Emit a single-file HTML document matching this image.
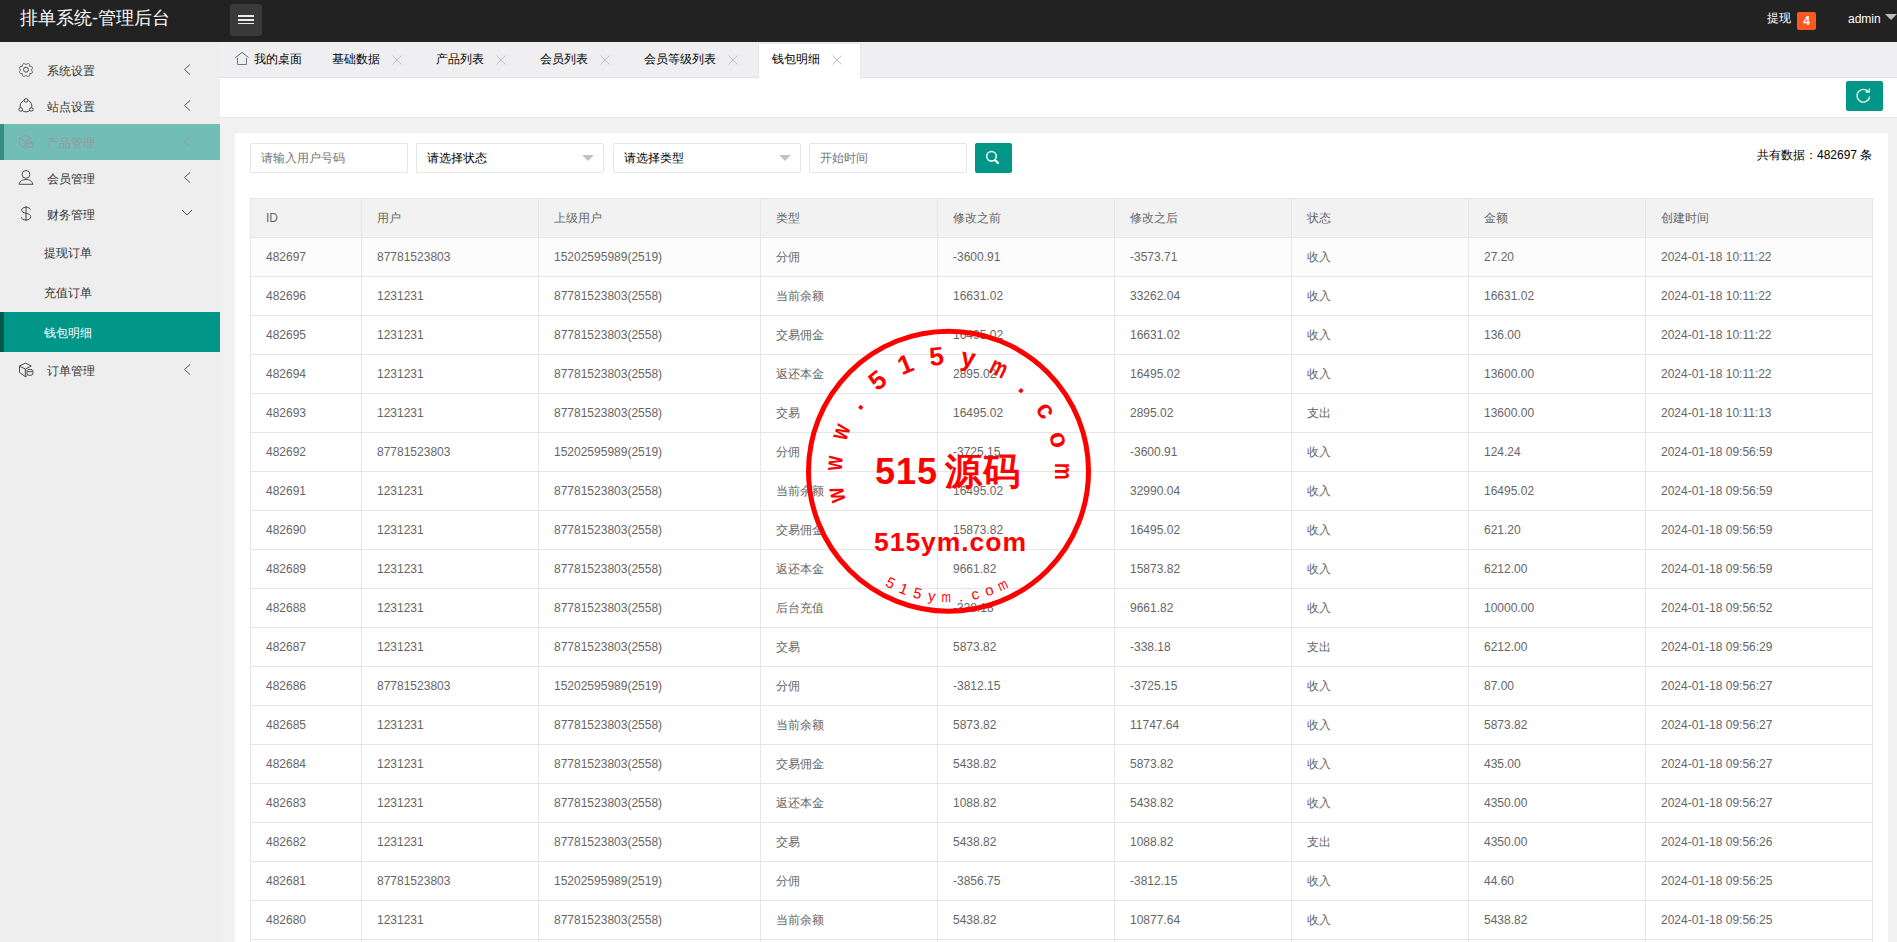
<!DOCTYPE html>
<html><head><meta charset="utf-8"><title>排单系统-管理后台</title>
<style>
*{margin:0;padding:0;box-sizing:border-box}
html,body{width:1897px;height:942px;overflow:hidden;background:#f1f1f1;font-family:"Liberation Sans",sans-serif;font-size:12px;color:#333}
.abs{position:absolute}
.hd{left:0;top:0;width:1897px;height:42px;background:#222}
.logo{left:20px;top:6px;font-size:18px;line-height:24px;color:#fff;white-space:nowrap}
.mbtn{left:230px;top:4px;width:32px;height:32px;background:#393939;border-radius:3px}
.mbtn i{position:absolute;left:8px;width:16px;height:2px;background:#ececec}
.tx{left:1767px;top:10px;line-height:16px;color:#fff;font-size:12px}
.badge{left:1797px;top:12px;width:19px;height:18px;background:#ff5722;border-radius:2px;color:#fff;font-weight:bold;font-size:12px;line-height:18px;text-align:center}
.admin{left:1848px;top:11px;line-height:16px;color:#fff;font-size:12px}
.tri{left:1885px;top:14px;width:0;height:0;border-left:6px solid transparent;border-right:6px solid transparent;border-top:6px solid #bdbdbd}

.side{left:0;top:42px;width:220px;height:900px;background:#eee}
.nav{left:0;width:220px;height:36px;color:#333}
.nav .t{position:absolute;left:47px;top:1px;line-height:36px;font-size:12px;white-space:nowrap}
.nav svg{position:absolute}
.sub{left:0;width:220px;height:40px}
.sub .t{position:absolute;left:44px;top:1px;line-height:40px;font-size:12px;color:#333}
.hover{background:#72bdb6}
.hover .t{color:#999}
.act{background:#009688}
.act .t{color:#fff}
.lbar{position:absolute;left:0;top:0;width:4px;height:100%}

.tabs{left:220px;top:42px;width:1677px;height:36px;background:#efeff2;border-bottom:1px solid #e2e2e2}
.tab{top:0;height:35px;line-height:35px;font-size:12px;color:#000;white-space:nowrap}
.x{position:absolute;top:13px;width:10px;height:10px}
.tabon{left:538px;top:1px;width:103px;height:35px;background:#fff;border:1px solid #e6e6e6;border-bottom:none}
.strip{left:220px;top:78px;width:1677px;height:40px;background:#fff;border-bottom:1px solid #e6e6e6}
.rbtn{left:1846px;top:81px;width:37px;height:30px;background:#009688;border-radius:2px}

.card{left:235px;top:133px;width:1653px;height:820px;background:#fff;border-radius:2px}
.inp{top:143px;height:30px;border:1px solid #e6e6e6;border-radius:2px;background:#fff}
.inp .p{position:absolute;left:10px;top:0;line-height:28px;color:#757575;font-size:12px;white-space:nowrap}
.inp .v{position:absolute;left:10px;top:0;line-height:28px;color:#000;font-size:12px;white-space:nowrap}
.inp .ar{position:absolute;top:11px;width:0;height:0;border-left:6px solid transparent;border-right:6px solid transparent;border-top:6px solid #c2c2c2}
.sbtn{left:975px;top:143px;width:37px;height:30px;background:#009688;border-radius:2px}
.total{left:1757px;top:147px;line-height:16px;color:#000;font-size:12px;white-space:nowrap}

.grid{left:250px;top:198px;width:1623px}
.row{display:flex;height:39px;border-bottom:1px solid #e6e6e6}
.row.h{height:40px;border-top:1px solid #e6e6e6;background:#f2f2f2}
.row.hov{background:#fcfcfc}
.c{border-left:1px solid #e6e6e6;padding-left:15px;line-height:38px;color:#666;font-size:12px;white-space:nowrap;overflow:hidden;flex:none}
.c:last-child{border-right:1px solid #e6e6e6}
.stamp{left:0;top:0;width:1897px;height:942px;pointer-events:none}
.tofu .z{font-size:1.3333em}
.tofu .zs{font-size:50px;stroke:#f00;stroke-width:4px;transform:translateY(4px)}
</style></head>
<body>
<!-- header -->
<div class="abs hd"></div>
<div class="abs logo"><span class="z">排单系统</span>-<span class="z">管理后台</span></div>
<div class="abs mbtn"><i style="top:11px;height:1.7px"></i><i style="top:15px;height:1.8px"></i><i style="top:19px;height:1.4px"></i></div>
<div class="abs tx"><span class="z">提现</span></div>
<div class="abs badge">4</div>
<div class="abs admin">admin</div>
<div class="abs tri"></div>

<!-- sidebar -->
<div class="abs side"></div>
<div class="abs nav " style="top:52px"><svg width="220" height="36" style="left:0;top:0"><path d="M32.37 20.64 L32.24 20.88 L32.06 21.09 L31.83 21.26 L31.56 21.41 L31.26 21.51 L30.93 21.58 L30.60 21.63 L30.27 21.65 L29.95 21.65 L29.68 21.68 L29.65 21.95 L29.65 22.27 L29.63 22.60 L29.58 22.93 L29.51 23.26 L29.41 23.56 L29.26 23.83 L29.09 24.06 L28.88 24.24 L28.64 24.37 L28.38 24.45 L28.10 24.47 L27.81 24.43 L27.52 24.34 L27.23 24.20 L26.95 24.02 L26.69 23.82 L26.44 23.60 L26.21 23.38 L26.00 23.20 L25.79 23.38 L25.56 23.60 L25.31 23.82 L25.05 24.02 L24.77 24.20 L24.48 24.34 L24.19 24.43 L23.90 24.47 L23.62 24.45 L23.36 24.37 L23.12 24.24 L22.91 24.06 L22.74 23.83 L22.59 23.56 L22.49 23.26 L22.42 22.93 L22.37 22.60 L22.35 22.27 L22.35 21.95 L22.32 21.68 L22.05 21.65 L21.73 21.65 L21.40 21.63 L21.07 21.58 L20.74 21.51 L20.44 21.41 L20.17 21.26 L19.94 21.09 L19.76 20.88 L19.63 20.64 L19.55 20.38 L19.53 20.10 L19.57 19.81 L19.66 19.52 L19.80 19.23 L19.98 18.95 L20.18 18.69 L20.40 18.44 L20.62 18.21 L20.80 18.00 L20.62 17.79 L20.40 17.56 L20.18 17.31 L19.98 17.05 L19.80 16.77 L19.66 16.48 L19.57 16.19 L19.53 15.90 L19.55 15.62 L19.63 15.36 L19.76 15.12 L19.94 14.91 L20.17 14.74 L20.44 14.59 L20.74 14.49 L21.07 14.42 L21.40 14.37 L21.73 14.35 L22.05 14.35 L22.32 14.32 L22.35 14.05 L22.35 13.73 L22.37 13.40 L22.42 13.07 L22.49 12.74 L22.59 12.44 L22.74 12.17 L22.91 11.94 L23.12 11.76 L23.36 11.63 L23.62 11.55 L23.90 11.53 L24.19 11.57 L24.48 11.66 L24.77 11.80 L25.05 11.98 L25.31 12.18 L25.56 12.40 L25.79 12.62 L26.00 12.80 L26.21 12.62 L26.44 12.40 L26.69 12.18 L26.95 11.98 L27.23 11.80 L27.52 11.66 L27.81 11.57 L28.10 11.53 L28.38 11.55 L28.64 11.63 L28.88 11.76 L29.09 11.94 L29.26 12.17 L29.41 12.44 L29.51 12.74 L29.58 13.07 L29.63 13.40 L29.65 13.73 L29.65 14.05 L29.68 14.32 L29.95 14.35 L30.27 14.35 L30.60 14.37 L30.93 14.42 L31.26 14.49 L31.56 14.59 L31.83 14.74 L32.06 14.91 L32.24 15.12 L32.37 15.36 L32.45 15.62 L32.47 15.90 L32.43 16.19 L32.34 16.48 L32.20 16.77 L32.02 17.05 L31.82 17.31 L31.60 17.56 L31.38 17.79 L31.20 18.00 L31.38 18.21 L31.60 18.44 L31.82 18.69 L32.02 18.95 L32.20 19.23 L32.34 19.52 L32.43 19.81 L32.47 20.10 L32.45 20.38 L32.37 20.64Z" fill="none" stroke="#444" stroke-width="0.95"/><circle cx="26" cy="17.7" r="2.5" fill="none" stroke="#444" stroke-width="0.95"/><path d="M190 12.5 L184.5 17.5 L190 22.5" fill="none" stroke="#555" stroke-width="1"/></svg><span class="t"><span class="z">系统设置</span></span></div>
<div class="abs nav " style="top:88px"><svg width="220" height="36" style="left:0;top:0"><circle cx="26" cy="18" r="5.9" fill="none" stroke="#444" stroke-width="0.95"/><circle cx="26.00" cy="12.40" r="1.8" fill="#eee" stroke="#444" stroke-width="0.95"/><circle cx="20.70" cy="21.40" r="1.8" fill="#eee" stroke="#444" stroke-width="0.95"/><circle cx="31.30" cy="21.40" r="1.8" fill="#eee" stroke="#444" stroke-width="0.95"/><path d="M190 12.5 L184.5 17.5 L190 22.5" fill="none" stroke="#555" stroke-width="1"/></svg><span class="t"><span class="z">站点设置</span></span></div>
<div class="abs nav hover" style="top:124px"><div class="lbar" style="background:#3b8c83"></div><svg width="220" height="36" style="left:0;top:0"><path d="M19.3 14.1 L25.4 11.1 L31.3 14.0 L25.3 17.0 Z M19.5 14.2 L19.5 20.4 L25.3 24.7 L25.3 17.0 M25.3 24.7 L27.3 23.6" fill="none" stroke="#999" stroke-width="0.95" stroke-linejoin="round"/><path d="M27.0 18.6 L27.0 22.1 M32.8 18.6 L32.8 22.1" stroke="#999" stroke-width="0.95"/><ellipse cx="29.9" cy="18.6" rx="2.9" ry="1.2" fill="#72bdb6" stroke="#999" stroke-width="0.95"/><path d="M27.0 22.1 A2.9 1.2 0 0 0 32.8 22.1" fill="none" stroke="#999" stroke-width="0.95"/><path d="M190 12.5 L184.5 17.5 L190 22.5" fill="none" stroke="#999" stroke-width="1"/></svg><span class="t"><span class="z">产品管理</span></span></div>
<div class="abs nav " style="top:160px"><svg width="220" height="36" style="left:0;top:0"><circle cx="26" cy="14.4" r="3.9" fill="none" stroke="#444" stroke-width="0.95"/><path d="M19 24.3 A7.2 6.3 0 0 1 33 24.3 Z" fill="none" stroke="#444" stroke-width="0.95"/><path d="M190 12.5 L184.5 17.5 L190 22.5" fill="none" stroke="#555" stroke-width="1"/></svg><span class="t"><span class="z">会员管理</span></span></div>
<div class="abs nav " style="top:196px"><svg width="220" height="36" style="left:0;top:0"><path d="M30.4 13.6 C30 12.0 28.3 11.3 26 11.3 C23.4 11.3 21.7 12.3 21.7 14.1 C21.7 16.0 23.6 16.8 26 17.3 C28.6 17.8 30.7 18.6 30.7 20.8 C30.7 22.7 28.7 23.9 26 23.9 C23.3 23.9 21.5 23.0 21.3 21.2 M26 10.0 L26 25.0" fill="none" stroke="#444" stroke-width="0.95"/><path d="M182 14 L187 19 L192 14" fill="none" stroke="#555" stroke-width="1"/></svg><span class="t"><span class="z">财务管理</span></span></div>
<div class="abs sub" style="top:232px"><span class="t"><span class="z">提现订单</span></span></div>
<div class="abs sub" style="top:272px"><span class="t"><span class="z">充值订单</span></span></div>
<div class="abs sub act" style="top:312px"><div class="lbar" style="background:#05564e"></div><span class="t"><span class="z">钱包明细</span></span></div>
<div class="abs nav " style="top:352px"><svg width="220" height="36" style="left:0;top:0"><path d="M19.3 14.1 L25.4 11.1 L31.3 14.0 L25.3 17.0 Z M19.5 14.2 L19.5 20.4 L25.3 24.7 L25.3 17.0 M25.3 24.7 L27.3 23.6" fill="none" stroke="#444" stroke-width="0.95" stroke-linejoin="round"/><path d="M27.0 18.6 L27.0 22.1 M32.8 18.6 L32.8 22.1" stroke="#444" stroke-width="0.95"/><ellipse cx="29.9" cy="18.6" rx="2.9" ry="1.2" fill="#eee" stroke="#444" stroke-width="0.95"/><path d="M27.0 22.1 A2.9 1.2 0 0 0 32.8 22.1" fill="none" stroke="#444" stroke-width="0.95"/><path d="M190 12.5 L184.5 17.5 L190 22.5" fill="none" stroke="#555" stroke-width="1"/></svg><span class="t"><span class="z">订单管理</span></span></div>

<!-- tabs -->
<div class="abs tabs">
<div class="abs tabon"></div><svg class="abs" style="left:15px;top:10px" width="15" height="14" viewBox="0 0 15 14"><path d="M0.4 5.6 L7 0.4 L13.6 5.6" fill="none" stroke="#666" stroke-width="1"/><path d="M2.5 6 L2.5 12.5 L11.5 12.5 L11.5 6" fill="none" stroke="#777" stroke-width="1"/></svg><div class="abs tab" style="left:34px"><span class="z">我的桌面</span></div><div class="abs tab" style="left:112px"><span class="z">基础数据</span></div><div class="abs" style="left:0;top:0"><svg class="x" style="left:172px" viewBox="0 0 10 10"><path d="M0.5 0.5 L9.5 9.5 M9.5 0.5 L0.5 9.5" stroke="#c0c0c0" stroke-width="1"/></svg></div><div class="abs tab" style="left:216px"><span class="z">产品列表</span></div><div class="abs" style="left:0;top:0"><svg class="x" style="left:276px" viewBox="0 0 10 10"><path d="M0.5 0.5 L9.5 9.5 M9.5 0.5 L0.5 9.5" stroke="#c0c0c0" stroke-width="1"/></svg></div><div class="abs tab" style="left:320px"><span class="z">会员列表</span></div><div class="abs" style="left:0;top:0"><svg class="x" style="left:380px" viewBox="0 0 10 10"><path d="M0.5 0.5 L9.5 9.5 M9.5 0.5 L0.5 9.5" stroke="#c0c0c0" stroke-width="1"/></svg></div><div class="abs tab" style="left:424px"><span class="z">会员等级列表</span></div><div class="abs" style="left:0;top:0"><svg class="x" style="left:508px" viewBox="0 0 10 10"><path d="M0.5 0.5 L9.5 9.5 M9.5 0.5 L0.5 9.5" stroke="#c0c0c0" stroke-width="1"/></svg></div><div class="abs tab" style="left:552px"><span class="z">钱包明细</span></div><div class="abs" style="left:0;top:0"><svg class="x" style="left:612px" viewBox="0 0 10 10"><path d="M0.5 0.5 L9.5 9.5 M9.5 0.5 L0.5 9.5" stroke="#c0c0c0" stroke-width="1"/></svg></div>
</div>
<div class="abs strip"></div>
<div class="abs rbtn"><svg width="37" height="30" viewBox="0 0 37 30"><path d="M22.6 11 A6.4 6.4 0 1 0 23.7 15.6" fill="none" stroke="#fff" stroke-width="1.3"/><path d="M19.6 10.9 L23.2 11.1 L23.4 7.6" fill="none" stroke="#fff" stroke-width="1.3"/></svg></div>

<!-- card -->
<div class="abs card"></div>
<div class="abs inp" style="left:250px;width:158px"><span class="p"><span class="z">请输入用户号码</span></span></div>
<div class="abs inp" style="left:416px;width:188px"><span class="v"><span class="z">请选择状态</span></span><i class="ar" style="left:165px"></i></div>
<div class="abs inp" style="left:613px;width:188px"><span class="v"><span class="z">请选择类型</span></span><i class="ar" style="left:165px"></i></div>
<div class="abs inp" style="left:809px;width:158px"><span class="p"><span class="z">开始时间</span></span></div>
<div class="abs sbtn"><svg width="37" height="30" viewBox="0 0 37 30"><circle cx="16.5" cy="13.3" r="4.8" fill="none" stroke="#fff" stroke-width="1.5"/><path d="M20 17 L23 20" stroke="#fff" stroke-width="2.2" stroke-linecap="round"/></svg></div>
<div class="abs total"><span class="z">共有数据：</span>482697 <span class="z">条</span></div>

<div class="abs grid">
<div class="row h"><div class="c" style="width:111px">ID</div><div class="c" style="width:177px"><span class="z">用户</span></div><div class="c" style="width:222px"><span class="z">上级用户</span></div><div class="c" style="width:177px"><span class="z">类型</span></div><div class="c" style="width:177px"><span class="z">修改之前</span></div><div class="c" style="width:177px"><span class="z">修改之后</span></div><div class="c" style="width:177px"><span class="z">状态</span></div><div class="c" style="width:177px"><span class="z">金额</span></div><div class="c" style="width:228px"><span class="z">创建时间</span></div></div>
<div class="row hov"><div class="c" style="width:111px">482697</div><div class="c" style="width:177px">87781523803</div><div class="c" style="width:222px">15202595989(2519)</div><div class="c" style="width:177px"><span class="z">分佣</span></div><div class="c" style="width:177px">-3600.91</div><div class="c" style="width:177px">-3573.71</div><div class="c" style="width:177px"><span class="z">收入</span></div><div class="c" style="width:177px">27.20</div><div class="c" style="width:228px">2024-01-18 10:11:22</div></div>
<div class="row"><div class="c" style="width:111px">482696</div><div class="c" style="width:177px">1231231</div><div class="c" style="width:222px">87781523803(2558)</div><div class="c" style="width:177px"><span class="z">当前余额</span></div><div class="c" style="width:177px">16631.02</div><div class="c" style="width:177px">33262.04</div><div class="c" style="width:177px"><span class="z">收入</span></div><div class="c" style="width:177px">16631.02</div><div class="c" style="width:228px">2024-01-18 10:11:22</div></div>
<div class="row"><div class="c" style="width:111px">482695</div><div class="c" style="width:177px">1231231</div><div class="c" style="width:222px">87781523803(2558)</div><div class="c" style="width:177px"><span class="z">交易佣金</span></div><div class="c" style="width:177px">16495.02</div><div class="c" style="width:177px">16631.02</div><div class="c" style="width:177px"><span class="z">收入</span></div><div class="c" style="width:177px">136.00</div><div class="c" style="width:228px">2024-01-18 10:11:22</div></div>
<div class="row"><div class="c" style="width:111px">482694</div><div class="c" style="width:177px">1231231</div><div class="c" style="width:222px">87781523803(2558)</div><div class="c" style="width:177px"><span class="z">返还本金</span></div><div class="c" style="width:177px">2895.02</div><div class="c" style="width:177px">16495.02</div><div class="c" style="width:177px"><span class="z">收入</span></div><div class="c" style="width:177px">13600.00</div><div class="c" style="width:228px">2024-01-18 10:11:22</div></div>
<div class="row"><div class="c" style="width:111px">482693</div><div class="c" style="width:177px">1231231</div><div class="c" style="width:222px">87781523803(2558)</div><div class="c" style="width:177px"><span class="z">交易</span></div><div class="c" style="width:177px">16495.02</div><div class="c" style="width:177px">2895.02</div><div class="c" style="width:177px"><span class="z">支出</span></div><div class="c" style="width:177px">13600.00</div><div class="c" style="width:228px">2024-01-18 10:11:13</div></div>
<div class="row"><div class="c" style="width:111px">482692</div><div class="c" style="width:177px">87781523803</div><div class="c" style="width:222px">15202595989(2519)</div><div class="c" style="width:177px"><span class="z">分佣</span></div><div class="c" style="width:177px">-3725.15</div><div class="c" style="width:177px">-3600.91</div><div class="c" style="width:177px"><span class="z">收入</span></div><div class="c" style="width:177px">124.24</div><div class="c" style="width:228px">2024-01-18 09:56:59</div></div>
<div class="row"><div class="c" style="width:111px">482691</div><div class="c" style="width:177px">1231231</div><div class="c" style="width:222px">87781523803(2558)</div><div class="c" style="width:177px"><span class="z">当前余额</span></div><div class="c" style="width:177px">16495.02</div><div class="c" style="width:177px">32990.04</div><div class="c" style="width:177px"><span class="z">收入</span></div><div class="c" style="width:177px">16495.02</div><div class="c" style="width:228px">2024-01-18 09:56:59</div></div>
<div class="row"><div class="c" style="width:111px">482690</div><div class="c" style="width:177px">1231231</div><div class="c" style="width:222px">87781523803(2558)</div><div class="c" style="width:177px"><span class="z">交易佣金</span></div><div class="c" style="width:177px">15873.82</div><div class="c" style="width:177px">16495.02</div><div class="c" style="width:177px"><span class="z">收入</span></div><div class="c" style="width:177px">621.20</div><div class="c" style="width:228px">2024-01-18 09:56:59</div></div>
<div class="row"><div class="c" style="width:111px">482689</div><div class="c" style="width:177px">1231231</div><div class="c" style="width:222px">87781523803(2558)</div><div class="c" style="width:177px"><span class="z">返还本金</span></div><div class="c" style="width:177px">9661.82</div><div class="c" style="width:177px">15873.82</div><div class="c" style="width:177px"><span class="z">收入</span></div><div class="c" style="width:177px">6212.00</div><div class="c" style="width:228px">2024-01-18 09:56:59</div></div>
<div class="row"><div class="c" style="width:111px">482688</div><div class="c" style="width:177px">1231231</div><div class="c" style="width:222px">87781523803(2558)</div><div class="c" style="width:177px"><span class="z">后台充值</span></div><div class="c" style="width:177px">-338.18</div><div class="c" style="width:177px">9661.82</div><div class="c" style="width:177px"><span class="z">收入</span></div><div class="c" style="width:177px">10000.00</div><div class="c" style="width:228px">2024-01-18 09:56:52</div></div>
<div class="row"><div class="c" style="width:111px">482687</div><div class="c" style="width:177px">1231231</div><div class="c" style="width:222px">87781523803(2558)</div><div class="c" style="width:177px"><span class="z">交易</span></div><div class="c" style="width:177px">5873.82</div><div class="c" style="width:177px">-338.18</div><div class="c" style="width:177px"><span class="z">支出</span></div><div class="c" style="width:177px">6212.00</div><div class="c" style="width:228px">2024-01-18 09:56:29</div></div>
<div class="row"><div class="c" style="width:111px">482686</div><div class="c" style="width:177px">87781523803</div><div class="c" style="width:222px">15202595989(2519)</div><div class="c" style="width:177px"><span class="z">分佣</span></div><div class="c" style="width:177px">-3812.15</div><div class="c" style="width:177px">-3725.15</div><div class="c" style="width:177px"><span class="z">收入</span></div><div class="c" style="width:177px">87.00</div><div class="c" style="width:228px">2024-01-18 09:56:27</div></div>
<div class="row"><div class="c" style="width:111px">482685</div><div class="c" style="width:177px">1231231</div><div class="c" style="width:222px">87781523803(2558)</div><div class="c" style="width:177px"><span class="z">当前余额</span></div><div class="c" style="width:177px">5873.82</div><div class="c" style="width:177px">11747.64</div><div class="c" style="width:177px"><span class="z">收入</span></div><div class="c" style="width:177px">5873.82</div><div class="c" style="width:228px">2024-01-18 09:56:27</div></div>
<div class="row"><div class="c" style="width:111px">482684</div><div class="c" style="width:177px">1231231</div><div class="c" style="width:222px">87781523803(2558)</div><div class="c" style="width:177px"><span class="z">交易佣金</span></div><div class="c" style="width:177px">5438.82</div><div class="c" style="width:177px">5873.82</div><div class="c" style="width:177px"><span class="z">收入</span></div><div class="c" style="width:177px">435.00</div><div class="c" style="width:228px">2024-01-18 09:56:27</div></div>
<div class="row"><div class="c" style="width:111px">482683</div><div class="c" style="width:177px">1231231</div><div class="c" style="width:222px">87781523803(2558)</div><div class="c" style="width:177px"><span class="z">返还本金</span></div><div class="c" style="width:177px">1088.82</div><div class="c" style="width:177px">5438.82</div><div class="c" style="width:177px"><span class="z">收入</span></div><div class="c" style="width:177px">4350.00</div><div class="c" style="width:228px">2024-01-18 09:56:27</div></div>
<div class="row"><div class="c" style="width:111px">482682</div><div class="c" style="width:177px">1231231</div><div class="c" style="width:222px">87781523803(2558)</div><div class="c" style="width:177px"><span class="z">交易</span></div><div class="c" style="width:177px">5438.82</div><div class="c" style="width:177px">1088.82</div><div class="c" style="width:177px"><span class="z">支出</span></div><div class="c" style="width:177px">4350.00</div><div class="c" style="width:228px">2024-01-18 09:56:26</div></div>
<div class="row"><div class="c" style="width:111px">482681</div><div class="c" style="width:177px">87781523803</div><div class="c" style="width:222px">15202595989(2519)</div><div class="c" style="width:177px"><span class="z">分佣</span></div><div class="c" style="width:177px">-3856.75</div><div class="c" style="width:177px">-3812.15</div><div class="c" style="width:177px"><span class="z">收入</span></div><div class="c" style="width:177px">44.60</div><div class="c" style="width:228px">2024-01-18 09:56:25</div></div>
<div class="row"><div class="c" style="width:111px">482680</div><div class="c" style="width:177px">1231231</div><div class="c" style="width:222px">87781523803(2558)</div><div class="c" style="width:177px"><span class="z">当前余额</span></div><div class="c" style="width:177px">5438.82</div><div class="c" style="width:177px">10877.64</div><div class="c" style="width:177px"><span class="z">收入</span></div><div class="c" style="width:177px">5438.82</div><div class="c" style="width:228px">2024-01-18 09:56:25</div></div>
<div class="row"><div class="c" style="width:111px">482679</div><div class="c" style="width:177px">1231231</div><div class="c" style="width:222px">87781523803(2558)</div><div class="c" style="width:177px"><span class="z">返还本金</span></div><div class="c" style="width:177px">1088.82</div><div class="c" style="width:177px">5438.82</div><div class="c" style="width:177px"><span class="z">收入</span></div><div class="c" style="width:177px">4350.00</div><div class="c" style="width:228px">2024-01-18 09:56:25</div></div>

</div>

<svg class="abs stamp" width="1897" height="942" viewBox="0 0 1897 942"><circle cx="948.5" cy="471.2" r="140" fill="none" stroke="#f00" stroke-width="5"/><g transform="rotate(-102.0 948.5 471.2)"><text transform="translate(948.5 364.7) scale(0.72 1)" text-anchor="middle" font-family="Liberation Sans" font-weight="bold" font-size="26" fill="#f00">w</text></g><g transform="rotate(-86.0 948.5 471.2)"><text transform="translate(948.5 364.7) scale(0.72 1)" text-anchor="middle" font-family="Liberation Sans" font-weight="bold" font-size="26" fill="#f00">w</text></g><g transform="rotate(-70.0 948.5 471.2)"><text transform="translate(948.5 364.7) scale(0.72 1)" text-anchor="middle" font-family="Liberation Sans" font-weight="bold" font-size="26" fill="#f00">w</text></g><g transform="rotate(-54.0 948.5 471.2)"><text transform="translate(948.5 364.7) scale(1.0 1)" text-anchor="middle" font-family="Liberation Sans" font-weight="bold" font-size="26" fill="#f00">.</text></g><g transform="rotate(-38.0 948.5 471.2)"><text transform="translate(948.5 364.7) scale(1.0 1)" text-anchor="middle" font-family="Liberation Sans" font-weight="bold" font-size="26" fill="#f00">5</text></g><g transform="rotate(-22.0 948.5 471.2)"><text transform="translate(948.5 364.7) scale(1.0 1)" text-anchor="middle" font-family="Liberation Sans" font-weight="bold" font-size="26" fill="#f00">1</text></g><g transform="rotate(-6.0 948.5 471.2)"><text transform="translate(948.5 364.7) scale(1.0 1)" text-anchor="middle" font-family="Liberation Sans" font-weight="bold" font-size="26" fill="#f00">5</text></g><g transform="rotate(10.0 948.5 471.2)"><text transform="translate(948.5 364.7) scale(1.0 1)" text-anchor="middle" font-family="Liberation Sans" font-weight="bold" font-size="26" fill="#f00">y</text></g><g transform="rotate(26.0 948.5 471.2)"><text transform="translate(948.5 364.7) scale(0.72 1)" text-anchor="middle" font-family="Liberation Sans" font-weight="bold" font-size="26" fill="#f00">m</text></g><g transform="rotate(42.0 948.5 471.2)"><text transform="translate(948.5 364.7) scale(1.0 1)" text-anchor="middle" font-family="Liberation Sans" font-weight="bold" font-size="26" fill="#f00">.</text></g><g transform="rotate(58.0 948.5 471.2)"><text transform="translate(948.5 364.7) scale(1.0 1)" text-anchor="middle" font-family="Liberation Sans" font-weight="bold" font-size="26" fill="#f00">c</text></g><g transform="rotate(74.0 948.5 471.2)"><text transform="translate(948.5 364.7) scale(1.0 1)" text-anchor="middle" font-family="Liberation Sans" font-weight="bold" font-size="26" fill="#f00">o</text></g><g transform="rotate(90.0 948.5 471.2)"><text transform="translate(948.5 364.7) scale(0.72 1)" text-anchor="middle" font-family="Liberation Sans" font-weight="bold" font-size="26" fill="#f00">m</text></g><g transform="rotate(27.4 948.5 471.2)"><text transform="translate(948.5 602.2) scale(1.0 1)" text-anchor="middle" font-family="Liberation Sans" font-size="15" fill="#f00">5</text></g><g transform="rotate(20.8 948.5 471.2)"><text transform="translate(948.5 602.2) scale(1.0 1)" text-anchor="middle" font-family="Liberation Sans" font-size="15" fill="#f00">1</text></g><g transform="rotate(14.2 948.5 471.2)"><text transform="translate(948.5 602.2) scale(1.0 1)" text-anchor="middle" font-family="Liberation Sans" font-size="15" fill="#f00">5</text></g><g transform="rotate(7.6 948.5 471.2)"><text transform="translate(948.5 602.2) scale(1.0 1)" text-anchor="middle" font-family="Liberation Sans" font-size="15" fill="#f00">y</text></g><g transform="rotate(1.0 948.5 471.2)"><text transform="translate(948.5 602.2) scale(0.75 1)" text-anchor="middle" font-family="Liberation Sans" font-size="15" fill="#f00">m</text></g><g transform="rotate(-5.6 948.5 471.2)"><text transform="translate(948.5 602.2) scale(1.0 1)" text-anchor="middle" font-family="Liberation Sans" font-size="15" fill="#f00">.</text></g><g transform="rotate(-12.2 948.5 471.2)"><text transform="translate(948.5 602.2) scale(1.0 1)" text-anchor="middle" font-family="Liberation Sans" font-size="15" fill="#f00">c</text></g><g transform="rotate(-18.8 948.5 471.2)"><text transform="translate(948.5 602.2) scale(1.0 1)" text-anchor="middle" font-family="Liberation Sans" font-size="15" fill="#f00">o</text></g><g transform="rotate(-25.4 948.5 471.2)"><text transform="translate(948.5 602.2) scale(0.75 1)" text-anchor="middle" font-family="Liberation Sans" font-size="15" fill="#f00">m</text></g><text x="875" y="483.5" font-family="Liberation Sans" font-weight="bold" font-size="36" letter-spacing="1" fill="#f00">515</text><text class="zs" x="945" y="484" font-family="Liberation Sans" font-size="37" textLength="75" lengthAdjust="spacing" fill="#f00" stroke="#f00" stroke-width="1.2">源码</text><text x="874" y="551" font-family="Liberation Sans" font-weight="bold" font-size="26.5" textLength="152" lengthAdjust="spacing" fill="#f00">515ym.com</text></svg>
<script>
(function(){try{var c=document.createElement("canvas").getContext("2d");c.font='100px "Liberation Sans", sans-serif';var w=c.measureText("\u7ba1\u7406").width;if(w<180){document.documentElement.className+=" tofu";}}catch(e){}})();
</script>
</body></html>
